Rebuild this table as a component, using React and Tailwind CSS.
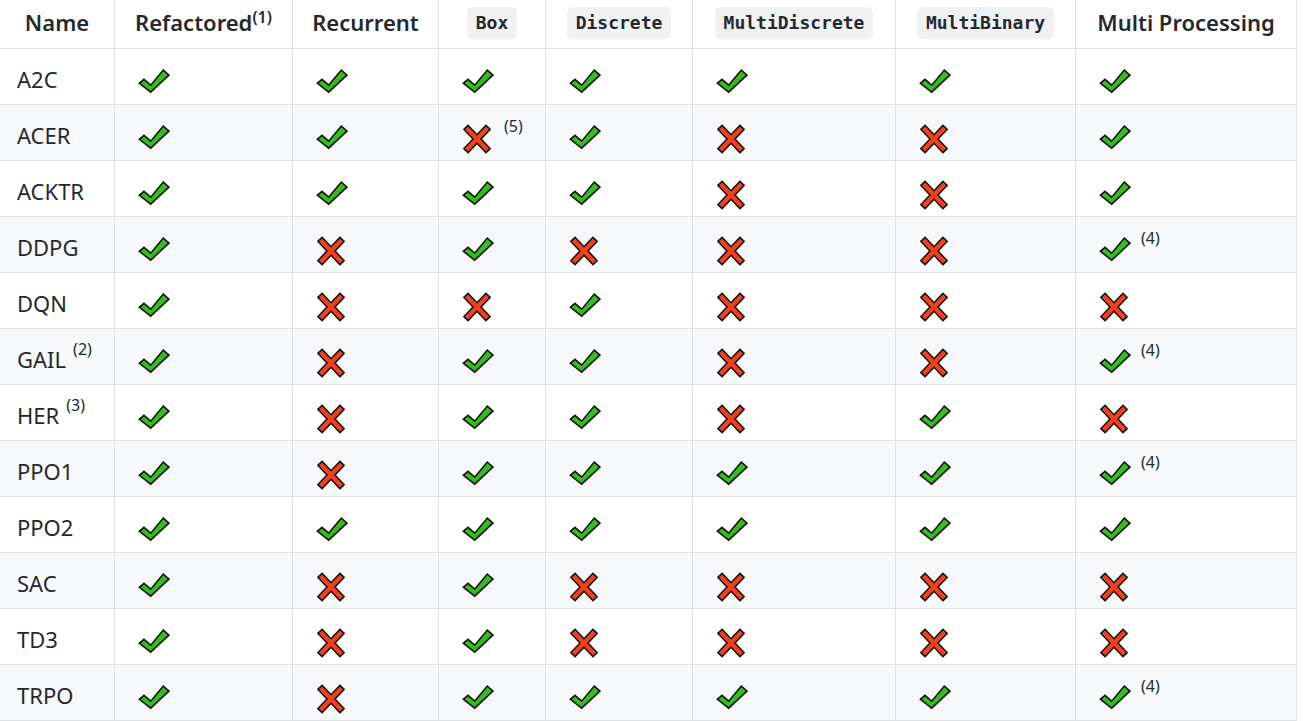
import React from 'react';

const widths = ['w-[115px]', 'w-[178px]', 'w-[146px]', 'w-[107px]', 'w-[147px]', 'w-[203px]', 'w-[180px]', 'w-[221px]'];

// y = supported, n = not supported, with an optional note number
const rows = [
  { name: 'A2C', cells: ['y', 'y', 'y', 'y', 'y', 'y', 'y'] },
  { name: 'ACER', cells: ['y', 'y', 'n5', 'y', 'n', 'n', 'y'] },
  { name: 'ACKTR', cells: ['y', 'y', 'y', 'y', 'n', 'n', 'y'] },
  { name: 'DDPG', cells: ['y', 'n', 'y', 'n', 'n', 'n', 'y4'] },
  { name: 'DQN', cells: ['y', 'n', 'n', 'y', 'n', 'n', 'n'] },
  { name: 'GAIL', note: '2', cells: ['y', 'n', 'y', 'y', 'n', 'n', 'y4'] },
  { name: 'HER', note: '3', cells: ['y', 'n', 'y', 'y', 'n', 'y', 'n'] },
  { name: 'PPO1', cells: ['y', 'n', 'y', 'y', 'y', 'y', 'y4'] },
  { name: 'PPO2', cells: ['y', 'y', 'y', 'y', 'y', 'y', 'y'] },
  { name: 'SAC', cells: ['y', 'n', 'y', 'n', 'n', 'n', 'n'] },
  { name: 'TD3', cells: ['y', 'n', 'y', 'n', 'n', 'n', 'n'] },
  { name: 'TRPO', cells: ['y', 'n', 'y', 'y', 'y', 'y', 'y4'] },
];

const Check = () => (
  <svg width="32" height="32" viewBox="0 0 32 32" className="shrink-0">
    <polygon
      points="6,12.4 12.7,18.2 25.3,3.1 30.9,8.1 12.7,25.2 1.4,16.3"
      fill="#31c01a"
      stroke="#111"
      strokeWidth="1.6"
      strokeLinejoin="miter"
    />
  </svg>
);

const Cross = () => (
  <svg width="32" height="32" viewBox="0 0 32 32" className="shrink-0">
    <g strokeLinecap="square">
      <path d="M6 6.5 L24 25.5 M24 6.5 L6 25.5" stroke="#111" strokeWidth="7.4" />
      <path d="M6 6.5 L24 25.5 M24 6.5 L6 25.5" stroke="#f2401d" strokeWidth="4.4" />
    </g>
  </svg>
);

const Note = ({ n }) => (
  <span className="ml-[10px] mt-[-8px] text-[16px] leading-[22px] text-[#24292f]">({n})</span>
);

const Code = ({ children }) => (
  <span className="rounded-md bg-[#eff1f3] px-[8.5px] py-[3px] font-['DejaVu_Sans_Mono',monospace] text-[18px] font-bold leading-[26px]">
    {children}
  </span>
);

const headers = [
  'Name',
  <span>
    Refactored<sup className="text-[16px] font-semibold">(1)</sup>
  </span>,
  'Recurrent',
  <Code>Box</Code>,
  <Code>Discrete</Code>,
  <Code>MultiDiscrete</Code>,
  <Code>MultiBinary</Code>,
  'Multi Processing',
];

export default function App() {
  return (
    <div className="h-[721px] w-[1303px] overflow-hidden bg-white font-['Noto_Sans','Open_Sans',sans-serif] text-[#24292f]">
      <div className="flex h-[49px] w-fit">
        {headers.map((h, i) => (
          <div
            key={i}
            className={`${widths[i]} flex shrink-0 items-center justify-center border-b border-r border-[#dfe2e5] pb-[3px] text-[22px] font-semibold`}
          >
            {h}
          </div>
        ))}
      </div>
      {rows.map((row, r) => (
        <div key={row.name} className={`flex h-[56px] w-fit ${r % 2 === 1 ? 'bg-[#f6f8fa]' : 'bg-white'}`}>
          <div className={`${widths[0]} flex shrink-0 items-start border-b border-r border-[#dfe2e5] pl-[17px] pt-[15px] text-[22px] leading-[30px]`}>
            {row.name}
            {row.note && <span className="ml-[7px] mt-[-6px] text-[16px] leading-[22px]">({row.note})</span>}
          </div>
          {row.cells.map((c, i) => (
            <div
              key={i}
              className={`${widths[i + 1]} flex shrink-0 items-start border-b border-r border-[#dfe2e5] pl-[23px] pt-[18px]`}
            >
              {c[0] === 'y' ? <Check /> : <Cross />}
              {c.length > 1 && <Note n={c.slice(1)} />}
            </div>
          ))}
        </div>
      ))}
    </div>
  );
}
